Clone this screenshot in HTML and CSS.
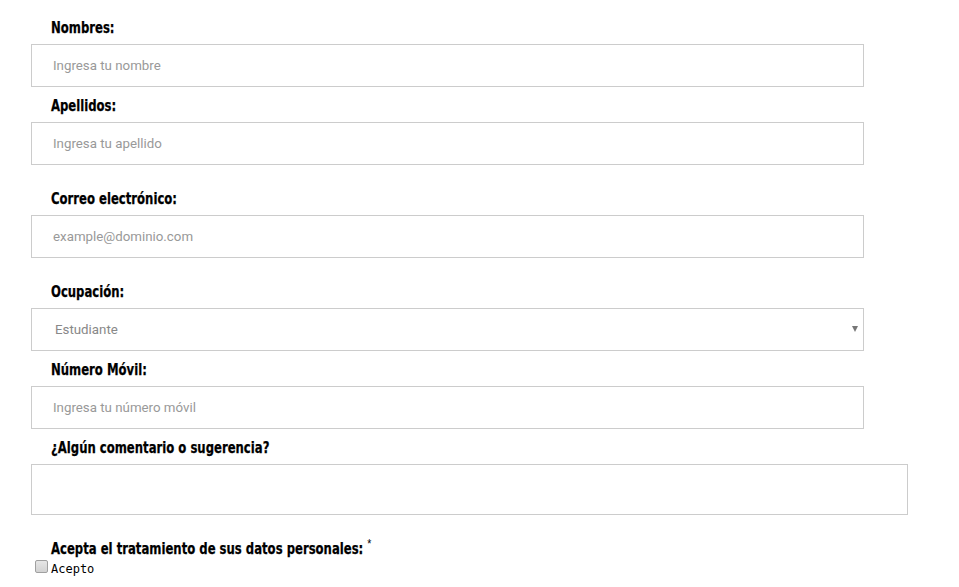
FILE: index.html
```html
<!DOCTYPE html>
<html lang="es">
<head>
<meta charset="utf-8">
<title>Formulario</title>
<link rel="stylesheet" href="styles.css">
</head>
<body>
<form class="form">
  <div class="group">
    <label class="lbl" for="n"><span class="txt">Nombres:</span></label>
    <input class="ctl" id="n" type="text" placeholder="Ingresa tu nombre">
  </div>
  <div class="group">
    <label class="lbl" for="a"><span class="txt">Apellidos:</span></label>
    <input class="ctl" id="a" type="text" placeholder="Ingresa tu apellido">
  </div>
  <div class="group wide">
    <label class="lbl" for="c"><span class="txt">Correo electrónico:</span></label>
    <input class="ctl" id="c" type="email" placeholder="example@dominio.com">
  </div>
  <div class="group wide">
    <label class="lbl" for="o"><span class="txt">Ocupación:</span></label>
    <div class="selwrap">
      <select class="ctl sel" id="o">
        <option>Estudiante</option>
      </select>
      <span class="arrow"></span>
    </div>
  </div>
  <div class="group">
    <label class="lbl" for="m"><span class="txt">Número Móvil:</span></label>
    <input class="ctl" id="m" type="text" placeholder="Ingresa tu número móvil">
  </div>
  <div class="group">
    <label class="lbl" for="t"><span class="txt">¿Algún comentario o sugerencia?</span></label>
    <textarea class="ctl area" id="t"></textarea>
  </div>
  <div class="group wide">
    <div class="lbl"><span class="txt">Acepta el tratamiento de sus datos personales:<span class="req">*</span></span></div>
    <div class="check"><input class="box" type="checkbox" id="k"><label class="chk" for="k">Acepto</label></div>
  </div>
</form>
</body>
</html>
```

FILE: styles.css
```css
* { box-sizing: border-box; }
body {
  margin: 0;
  background: #fff;
}
.form {
  padding: 17px 0 0 31px;
  width: 920px;
}
.group { margin-top: 8px; }
.group:first-child { margin-top: 0; }
.group.wide { margin-top: 23px; }
.lbl {
  display: block;
  margin: 0 0 7px 20px;
  height: 20px;
  line-height: 20px;
  font-family: "DejaVu Sans", "Liberation Sans", sans-serif;
  font-stretch: condensed;
  font-weight: bold;
  font-size: 16px;
  color: #000;
  white-space: nowrap;
}
.txt {
  display: inline-block;
  transform: scaleX(0.81);
  transform-origin: left center;
  -webkit-text-stroke: 0.25px #000;
  position: relative;
  top: 1px;
}
.req {
  font-family: "Liberation Sans", sans-serif;
  font-weight: normal;
  font-size: 13px;
  -webkit-text-stroke: 0;
  vertical-align: top;
  position: relative;
  top: -5px;
  margin-left: 5px;
}
.ctl {
  display: block;
  width: 833px;
  height: 43px;
  margin: 0;
  border: 1px solid #cccccc;
  border-radius: 0;
  padding: 0 21px;
  font-family: Roboto, "Liberation Sans", sans-serif;
  font-size: 13.3px;
  color: #555;
  background: #fff;
  outline: none;
}
.ctl::placeholder { color: #999; }
.selwrap {
  position: relative;
  width: 833px;
}
.sel {
  appearance: none;
  -webkit-appearance: none;
  padding-left: 23px;
  color: #888;
}
.arrow {
  position: absolute;
  right: 6px;
  top: 18px;
  width: 0;
  height: 0;
  border-left: 3.5px solid transparent;
  border-right: 3.5px solid transparent;
  border-top: 6px solid #777;
}
.area {
  width: 877px;
  height: 51px;
  resize: none;
  padding: 6px 21px;
}
.lbl + .check { margin-top: -7px; }
.check {
  display: flex;
  align-items: flex-start;
  height: 20px;
}
.box {
  appearance: none;
  -webkit-appearance: none;
  margin: 2px 3px 3px 4px;
  width: 13px;
  height: 13px;
  border: 1px solid #a0a0a0;
  border-radius: 2px;
  background: linear-gradient(#e6e6e6, #d2d2d2);
}
.chk {
  font-family: "DejaVu Sans Mono", monospace;
  font-size: 12px;
  line-height: 14px;
  color: #000;
  position: relative;
  top: 4px;
}
```
